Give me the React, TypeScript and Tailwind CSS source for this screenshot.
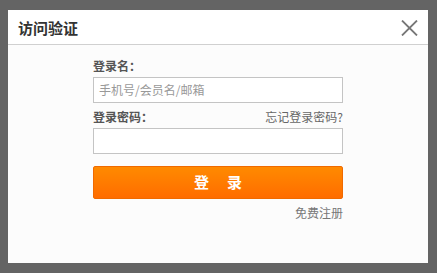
import React from 'react';

const FONT = { fontFamily: '"Noto Sans CJK SC", "Noto Sans", sans-serif' };

export default function App() {
  return (
    <div className="w-[437px] h-[273px] bg-[#646464] pl-[8px] pr-[9px] pt-[10px] pb-[10px]" style={FONT}>
      <div className="w-full h-full bg-[#fcfcfc] flex flex-col">
        {/* Header */}
        <div className="h-[35px] bg-white border-b border-[#d0d0d0] flex items-center justify-between pl-[10px] pr-[10px] shrink-0">
          <span className="text-[15px] font-bold text-[#333] leading-none">访问验证</span>
          <svg width="17" height="16" viewBox="0 0 17 16" className="mt-[1px]">
            <path d="M1 0.5 L16 15.5 M16 0.5 L1 15.5" stroke="#777" strokeWidth="1.8" fill="none" />
          </svg>
        </div>

        {/* Form */}
        <div className="w-[250px] ml-[85px] flex flex-col pt-[11px]">
          <label className="text-[12px] font-bold text-[#555] leading-[20px]">登录名：</label>
          <div className="mt-[1px] h-[26px] border border-[#c4c4c4] bg-white flex items-center px-[5px]">
            <span className="text-[12px] text-[#999]">手机号/会员名/邮箱</span>
          </div>
          <div className="mt-[4px] flex items-center justify-between leading-[20px]">
            <span className="text-[12px] font-bold text-[#555]">登录密码：</span>
            <span className="text-[12px] text-[#666]">忘记登录密码?</span>
          </div>
          <div className="mt-[1px] h-[26px] border border-[#c4c4c4] bg-white" />
          <button className="mt-[12px] h-[33px] rounded-[2px] border border-[#f06a00] bg-gradient-to-b from-[#ff8a00] to-[#ff6c00] text-white text-[15px] font-bold tracking-[18px] pl-[18px] flex items-center justify-center">
            登录
          </button>
          <div className="mt-[4px] text-right text-[12px] text-[#777] leading-[20px]">免费注册</div>
        </div>
      </div>
    </div>
  );
}
